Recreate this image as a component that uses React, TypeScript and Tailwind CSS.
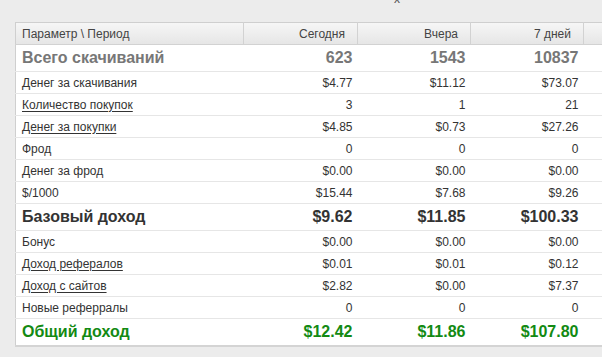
import React from 'react';

type Row = {
  label: string;
  values: string[];
  kind?: 'total' | 'base' | 'grand';
  link?: boolean;
};

const rows: Row[] = [
  { label: 'Всего скачиваний', values: ['623', '1543', '10837'], kind: 'total' },
  { label: 'Денег за скачивания', values: ['$4.77', '$11.12', '$73.07'] },
  { label: 'Количество покупок', values: ['3', '1', '21'], link: true },
  { label: 'Денег за покупки', values: ['$4.85', '$0.73', '$27.26'], link: true },
  { label: 'Фрод', values: ['0', '0', '0'] },
  { label: 'Денег за фрод', values: ['$0.00', '$0.00', '$0.00'] },
  { label: '$/1000', values: ['$15.44', '$7.68', '$9.26'] },
  { label: 'Базовый доход', values: ['$9.62', '$11.85', '$100.33'], kind: 'base' },
  { label: 'Бонус', values: ['$0.00', '$0.00', '$0.00'] },
  { label: 'Доход рефералов', values: ['$0.01', '$0.01', '$0.12'], link: true },
  { label: 'Доход с сайтов', values: ['$2.82', '$0.00', '$7.37'], link: true },
  { label: 'Новые реферралы', values: ['0', '0', '0'] },
  { label: 'Общий доход', values: ['$12.42', '$11.86', '$107.80'], kind: 'grand' },
];

const headers = ['Сегодня', 'Вчера', '7 дней'];

function rowStyle(kind?: Row['kind']) {
  if (kind === 'total') return 'h-[27px] text-[16px] font-bold text-[#777]';
  if (kind === 'base') return 'h-[27px] text-[16px] font-bold text-[#333]';
  if (kind === 'grand') return 'h-[27px] text-[16px] font-bold text-[#138a13]';
  return 'h-[22px] text-[12px] text-[#333]';
}

export default function App() {
  return (
    <div className="w-[602px] h-[357px] bg-[#ececec] overflow-hidden font-['Liberation_Sans',Arial,sans-serif]">
      {/* stray close mark above the table */}
      <div className="h-[22px] pl-[394px] overflow-hidden">
        <div className="-mt-[8px] text-[12px] leading-[14px] text-[#555]">x</div>
      </div>

      <div className="pl-[15px]">
        <table className="w-[630px] table-fixed border-collapse bg-white border-l border-t border-b-2 border-[#cfcfcf] border-b-[#d4d4d4]">
          <colgroup>
            <col className="w-[228px]" />
            <col className="w-[114px]" />
            <col className="w-[113px]" />
            <col className="w-[113px]" />
            <col />
          </colgroup>
          <thead>
            <tr className="h-[22px] bg-gradient-to-b from-[#f6f6f6] to-[#e6e6e6] text-[12px] text-[#444] border-b border-[#d2d2d2]">
              <th className="font-normal text-left pl-[6px] border-r border-[#d2d2d2]">Параметр \ Период</th>
              {headers.map((h) => (
                <th key={h} className="font-normal text-right pr-[12px] border-r border-[#d2d2d2]">
                  {h}
                </th>
              ))}
              <th />
            </tr>
          </thead>
          <tbody>
            {rows.map((r) => (
              <tr key={r.label} className={`${rowStyle(r.kind)} border-b border-[#e6e6e6] last:border-b-0`}>
                <td className="pl-[6px] whitespace-nowrap">
                  <span className={r.link ? 'underline underline-offset-2' : ''}>{r.label}</span>
                </td>
                {r.values.map((v, i) => (
                  <td key={i} className="text-right pr-[5px] whitespace-nowrap">
                    {v}
                  </td>
                ))}
                <td />
              </tr>
            ))}
          </tbody>
        </table>
      </div>
    </div>
  );
}
